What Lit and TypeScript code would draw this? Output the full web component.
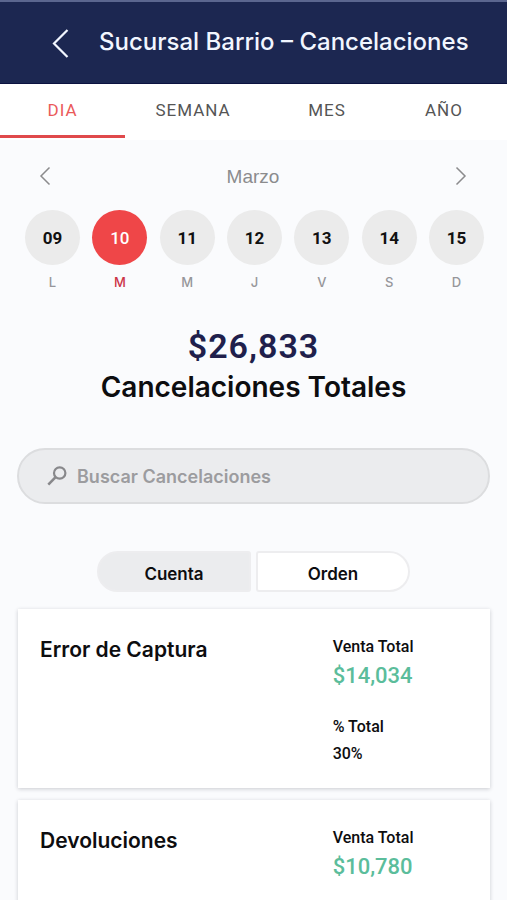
import { LitElement, html, css } from "lit";
import { customElement, state } from "lit/decorators.js";
import { classMap } from "lit/directives/class-map.js";

interface Entry {
  name: string;
  total: string;
  percent?: string;
}

const TABS = ["DIA", "SEMANA", "MES", "AÑO"];
const DAYS = [
  ["09", "L"],
  ["10", "M"],
  ["11", "M"],
  ["12", "J"],
  ["13", "V"],
  ["14", "S"],
  ["15", "D"],
];
const ENTRIES: Entry[] = [
  { name: "Error de Captura", total: "$14,034", percent: "30%" },
  { name: "Devoluciones", total: "$10,780" },
];

@customElement("app-root")
export class AppRoot extends LitElement {
  @state() private tab = 0;
  @state() private day = 1;
  @state() private group = 0;

  static styles = css`
    :host {
      display: block;
      height: 100vh;
      overflow: hidden;
      background: #fafbfd;
      color: #0d0d0f;
      font-family: Roboto, "Liberation Sans", sans-serif;
    }
    * {
      box-sizing: border-box;
    }
    button {
      margin: 0;
      padding: 0;
      border: 0;
      background: none;
      color: inherit;
      font: inherit;
      cursor: pointer;
    }
    svg {
      display: block;
      fill: none;
      stroke: currentColor;
    }
    h1,
    h2,
    p,
    dl,
    dd {
      margin: 0;
    }
    .bar {
      display: flex;
      align-items: center;
      gap: 28px;
      height: 84px;
      padding-left: 50px;
      border-top: 2px solid #5b668f;
      border-bottom: 1px solid #0c1240;
      background: #1c2751;
      color: #f2f6ff;
    }
    .bar h1 {
      padding-bottom: 2px;
      font: 500 24px/32px Inter, "Liberation Sans", sans-serif;
      white-space: nowrap;
    }
    .tabs {
      display: grid;
      grid-template-columns: 125fr 136fr 132fr 102fr;
      height: 56px;
      padding-right: 12px;
      background: #fff;
    }
    .tab {
      border-bottom: 3px solid transparent;
      margin-bottom: 2px;
      color: #555;
      font-size: 17px;
      letter-spacing: 1px;
    }
    .tab.on {
      border-color: #e0494b;
      color: #ea5a5a;
    }
    .month {
      display: flex;
      align-items: center;
      justify-content: space-between;
      height: 70px;
      padding: 2px 38px 0 37px;
      color: #8b8b8d;
      font: 400 19px/24px "Liberation Sans", Arial, sans-serif;
    }
    .month span {
      padding-top: 2px;
    }
    .days {
      display: flex;
      justify-content: space-between;
      padding: 0 23px 0 25px;
    }
    .day {
      display: flex;
      flex-direction: column;
      align-items: center;
      gap: 9px;
      color: #96969a;
      font: 500 13px/16px Inter, "Liberation Sans", sans-serif;
    }
    .num {
      width: 55px;
      height: 55px;
      border-radius: 50%;
      background: #ebebeb;
      color: #111;
      font: 700 17px/57px Roboto, sans-serif;
    }
    .day.on {
      color: #cc3347;
    }
    .day.on .num {
      background: #ef4648;
      color: #fff;
      font-weight: 500;
    }
    .summary {
      padding-top: 35px;
      text-align: center;
    }
    .amount {
      color: #201f4c;
      font-size: 34px;
      font-weight: 600;
      line-height: 42px;
      letter-spacing: 1px;
    }
    .caption {
      font: 600 28px/40px Inter, sans-serif;
    }
    .search {
      display: flex;
      align-items: center;
      gap: 10px;
      height: 56px;
      margin: 41px 17px 0;
      padding: 0 28px;
      border: 2px solid #dcdddf;
      border-radius: 28px;
      background: #ebecee;
      color: #88888b;
    }
    .search input {
      flex: 1;
      min-width: 0;
      padding: 2px 0 0;
      border: 0;
      outline: 0;
      background: none;
      color: #333;
      font: 600 18px/28px Inter, sans-serif;
    }
    .search input::placeholder {
      color: #9c9c9f;
      opacity: 1;
    }
    .switch {
      display: flex;
      justify-content: center;
      gap: 5px;
      padding: 47px 0 17px;
    }
    .option {
      width: 154px;
      height: 41px;
      padding-top: 4px;
      border: 2px solid #ededef;
      background: #fff;
      font: 600 17px/24px Inter, sans-serif;
    }
    .option:first-child {
      border-radius: 21px 3px 3px 21px;
    }
    .option:last-child {
      border-radius: 3px 21px 21px 3px;
    }
    .option.on {
      background: #ebecee;
    }
    .list {
      display: grid;
      gap: 12px;
      padding: 0 17px 0 18px;
    }
    .card {
      display: grid;
      grid-template-columns: 292fr 135fr;
      min-height: 179px;
      padding: 24px 22px 20px;
      background: #fff;
      box-shadow: 0 1px 4px rgba(30, 35, 50, 0.22);
    }
    .card h2 {
      font: 600 21px/34px Inter, sans-serif;
    }
    .card dt,
    .card dd {
      font-size: 16px;
      font-weight: 500;
      line-height: 27px;
    }
    .card .money {
      margin-bottom: 22px;
      color: #5bbd9b;
      font-size: 22px;
      line-height: 31px;
    }
  `;

  render() {
    return html`
      <header class="bar">
        <button aria-label="Volver">
          <svg width="21" height="30" viewBox="0 0 21 30" stroke-width="2.2">
            <path d="M17.5 2 4 15.5 17.5 29" />
          </svg>
        </button>
        <h1>Sucursal Barrio – Cancelaciones</h1>
      </header>
      <nav class="tabs">
        ${TABS.map(
          (label, i) => html`<button
            class=${classMap({ tab: true, on: i === this.tab })}
            @click=${() => (this.tab = i)}
          >
            ${label}
          </button>`
        )}
      </nav>
      <div class="month">
        <button aria-label="Mes anterior">
          <svg width="16" height="20" viewBox="0 0 16 20" stroke-width="1.5">
            <path d="M12.5 1.5 4 10 12.5 18.5" />
          </svg>
        </button>
        <span>Marzo</span>
        <button aria-label="Mes siguiente">
          <svg width="16" height="20" viewBox="0 0 16 20" stroke-width="1.5">
            <path d="M3.5 1.5 12 10 3.5 18.5" />
          </svg>
        </button>
      </div>
      <div class="days">
        ${DAYS.map(
          ([num, letter], i) => html`<button
            class=${classMap({ day: true, on: i === this.day })}
            @click=${() => (this.day = i)}
          >
            <span class="num">${num}</span><span>${letter}</span>
          </button>`
        )}
      </div>
      <section class="summary">
        <p class="amount">$26,833</p>
        <p class="caption">Cancelaciones Totales</p>
      </section>
      <label class="search">
        <svg width="20" height="20" viewBox="0 0 20 20" stroke-width="2.2">
          <circle cx="12.7" cy="7" r="5.7" />
          <path d="M8.6 11.2 1.3 18.6" stroke-width="2.6" />
        </svg>
        <input
          type="text"
          aria-label="Buscar Cancelaciones"
          placeholder="Buscar Cancelaciones"
        />
      </label>
      <div class="switch">
        ${["Cuenta", "Orden"].map(
          (label, i) => html`<button
            class=${classMap({ option: true, on: i === this.group })}
            @click=${() => (this.group = i)}
          >
            ${label}
          </button>`
        )}
      </div>
      <main class="list">
        ${ENTRIES.map(
          (e) => html`<article class="card">
            <h2>${e.name}</h2>
            <dl>
              <dt>Venta Total</dt>
              <dd class="money">${e.total}</dd>
              ${e.percent
                ? html`<dt>% Total</dt>
                    <dd>${e.percent}</dd>`
                : null}
            </dl>
          </article>`
        )}
      </main>
    `;
  }
}
